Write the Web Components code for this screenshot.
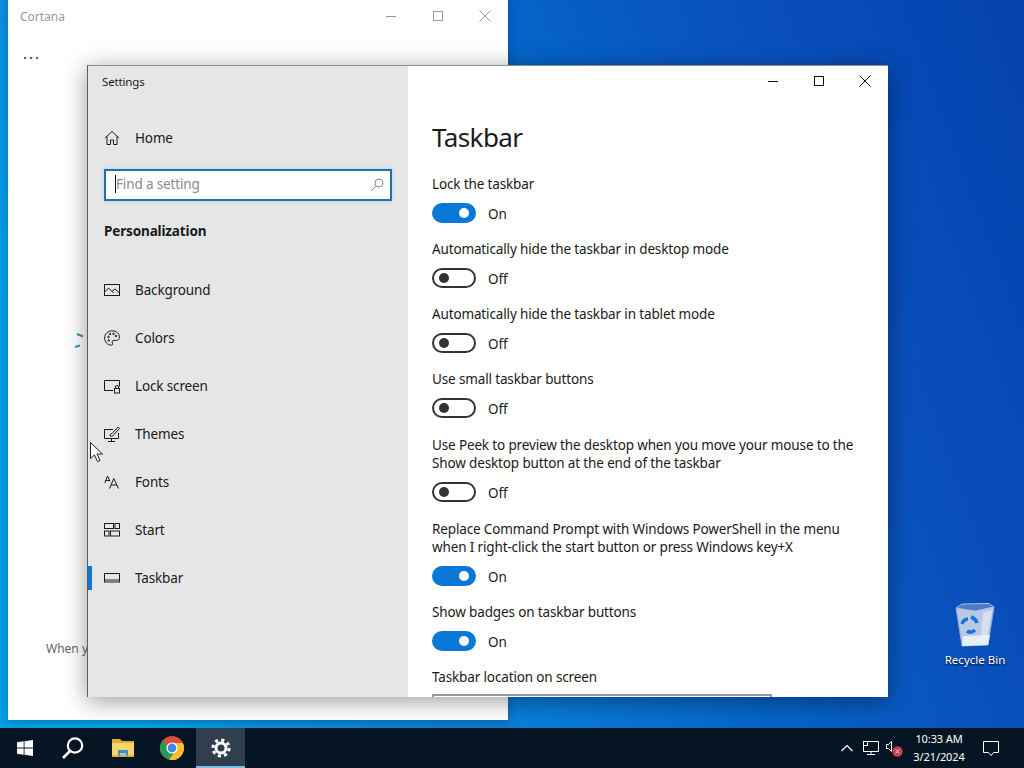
<!DOCTYPE html>
<html lang="en">
<head>
<meta charset="utf-8">
<title>Taskbar settings</title>
<style>
  html, body { margin: 0; height: 100%; overflow: hidden; }
  body { font-family: "Noto Sans", "Liberation Sans", sans-serif; }
</style>
</head>
<body>
<win-desktop>
  <cortana-window></cortana-window>
  <desktop-icon label="Recycle Bin"></desktop-icon>
  <settings-window>
    <nav-item slot="nav" icon="background">Background</nav-item>
    <nav-item slot="nav" icon="colors">Colors</nav-item>
    <nav-item slot="nav" icon="lock">Lock screen</nav-item>
    <nav-item slot="nav" icon="themes">Themes</nav-item>
    <nav-item slot="nav" icon="fonts">Fonts</nav-item>
    <nav-item slot="nav" icon="start">Start</nav-item>
    <nav-item slot="nav" icon="taskbar" active>Taskbar</nav-item>

    <setting-toggle on>Lock the taskbar</setting-toggle>
    <setting-toggle>Automatically hide the taskbar in desktop mode</setting-toggle>
    <setting-toggle>Automatically hide the taskbar in tablet mode</setting-toggle>
    <setting-toggle>Use small taskbar buttons</setting-toggle>
    <setting-toggle style="margin-top:1px;margin-bottom:1px">Use Peek to preview the desktop when you move your mouse to the<br>Show desktop button at the end of the taskbar</setting-toggle>
    <setting-toggle on>Replace Command Prompt with Windows PowerShell in the menu<br>when I right-click the start button or press Windows key+X</setting-toggle>
    <setting-toggle on>Show badges on taskbar buttons</setting-toggle>
    <setting-select>Taskbar location on screen</setting-select>
  </settings-window>
  <mouse-cursor></mouse-cursor>
  <win-taskbar></win-taskbar>
</win-desktop>

<script>
const capControls = (color) => `
  <svg width="16" height="16" viewBox="0 0 16 16" fill="none" stroke="${color}"><path d="M3 8.5h10"/></svg>
  <svg width="16" height="16" viewBox="0 0 16 16" fill="none" stroke="${color}"><rect x="3.5" y="3.5" width="9" height="9"/></svg>
  <svg width="16" height="16" viewBox="0 0 16 16" fill="none" stroke="${color}"><path d="M2.5 2.5l11 11M13.5 2.5l-11 11"/></svg>`;

const navIcons = {
  background: '<rect x=".5" y="2.5" width="15" height="11"/><path d="M.5 10l4-4 5 5M8 9.500l3-2.500 4.500 4"/>',
  colors: '<path d="M8 .8C3.800.8.600 4 .600 8c0 4 3.200 7.200 6.600 7.200 1.600 0 1.800-1.200 1.200-2.200-.8-1.300 0-2.600 1.600-2.600h2.400c1.800 0 3-1.200 3-3C15.400 3.400 12 .8 8 .8z"/><circle cx="4.500" cy="7" r=".8"/><circle cx="6" cy="4" r=".8"/><circle cx="9.500" cy="3.800" r=".8"/><circle cx="4.800" cy="10.500" r=".8"/><circle cx="12" cy="6" r=".8"/>',
  lock: '<path d="M9 12.500H.5v-10h15v6"/><rect x="10.500" y="10.500" width="5" height="4.500"/><path d="M11.500 10.500V9a1.500 1.500 0 0 1 3 0v1.500"/>',
  themes: '<path d="M9 3.500H.5v9h14V7M7.500 12.500v2.500M4 15.500h7"/><path d="M6 10c0-2 1-2.500 2-2.500L14 1l1.500 1.500L9.500 9c0 1-1.500 1.500-3.500 1z"/>',
  fonts: '<path d="M.8 9L3.500 2 6 7.500M1.600 6.500h3.600M5.500 14.500L9.800 4.500l4.700 10M7 11h6"/>',
  start: '<rect x=".5" y="1.500" width="9" height="5"/><rect x="11" y="1.500" width="4.500" height="5"/><rect x=".5" y="9" width="4.500" height="5"/><rect x="6.500" y="9" width="9" height="5"/>',
  taskbar: '<rect x=".5" y="3.500" width="15" height="8.500"/><path d="M.5 10h15"/>'
};

class WinDesktop extends HTMLElement {
  connectedCallback() {
    this.attachShadow({ mode: 'open' });
    this.shadowRoot.innerHTML = `
      <style>
        :host {
          display: block;
          position: relative;
          width: 1024px;
          height: 768px;
          overflow: hidden;
          background: linear-gradient(70deg, #00a2ea 13%, #0a90e0 22%, #0a7ed8 41%, #0563c6 61%, #0a50bc 78%, #0442ad 100%);
        }
      </style>
      <slot></slot>
    `;
  }
}

class CortanaWindow extends HTMLElement {
  connectedCallback() {
    this.attachShadow({ mode: 'open' });
    this.shadowRoot.innerHTML = `
      <style>
        :host {
          display: block;
          position: absolute;
          left: 8px; top: 0;
          width: 500px; height: 720px;
          background: #fff;
          box-shadow: 0 2px 10px rgba(0,0,0,.25);
          color: #9a9a9a;
          font-size: 12px;
        }
        .bar { display: flex; align-items: center; height: 32px; padding-left: 12px; }
        .bar span { flex: 1; }
        .ctl { display: flex; gap: 31px; padding-right: 15px; }
        .more { color: #222; font-size: 15px; letter-spacing: 2px; line-height: 16px; padding: 0 0 0 15px; margin-top: 13px; }
        .spin { position: absolute; left: 66px; top: 332px; }
        .note { position: absolute; left: 38px; top: 640px; color: #666; }
      </style>
      <div class="bar"><span>Cortana</span><div class="ctl">${capControls('#9a9a9a')}</div></div>
      <div class="more">...</div>
      <svg class="spin" width="12" height="18" viewBox="0 0 12 18" fill="none" stroke="#2f9bb8" stroke-width="2"><path d="M3 2l6 2.500M1 15l5-1.500"/></svg>
      <div class="note">When you</div>
    `;
  }
}

class SettingsWindow extends HTMLElement {
  connectedCallback() {
    this.attachShadow({ mode: 'open' });
    this.shadowRoot.innerHTML = `
      <style>
        :host {
          display: grid;
          grid-template-columns: 320px 1fr;
          position: absolute;
          left: 87px; top: 65px;
          width: 801px; height: 632px;
          box-sizing: border-box;
          border-left: 1px solid #55606a;
          border-top: 1px solid #8a9098;
          background: #fff;
          box-shadow: 0 4px 22px rgba(0,0,0,.4);
          color: #1a1a1a;
          overflow: hidden;
          font-size: 13.500px;
          letter-spacing: -.14px;
        }
        aside { background: #e6e6e6; display: flex; flex-direction: column; }
        .title { height: 32px; line-height: 32px; padding-left: 14px; font-size: 11.500px; }
        .home { display: flex; align-items: center; height: 48px; margin-top: 16px; padding-left: 16px; gap: 15px; }
        .search {
          display: flex; align-items: center;
          height: 32px; box-sizing: border-box;
          margin: 7px 16px 0 16px;
          border: 2px solid #2272a8;
          background: #fff;
          padding: 0 5px 0 9px;
          color: #8a8a8a;
          box-shadow: 0 0 4px rgba(120,190,240,.5);
        }
        .search span { flex: 1; border-left: 1px solid #111; line-height: 18px; margin-top: -2px; }
        h2 { font-size: inherit; font-weight: 700; margin: 20px 0 0 16px; line-height: 20px; }
        .nav { display: flex; flex-direction: column; margin-top: 25px; }
        main { position: relative; padding: 0 24px; }
        .ctl { position: absolute; top: 7px; right: 15px; display: flex; gap: 30px; }
        h1 { font-size: 26px; letter-spacing: -.6px; font-weight: 400; margin: 52px 0 19px; line-height: 38px; }
        .list { display: flex; flex-direction: column; }
      </style>
      <aside>
        <div class="title">Settings</div>
        <div class="home">
          <svg width="16" height="16" viewBox="0 0 16 16" fill="none" stroke="#1a1a1a"><path d="M1 8l7-6.500L15 8M3 6.500v8h3.500V10h3v4.500H13v-8"/></svg>
          <span>Home</span>
        </div>
        <div class="search">
          <span>Find a setting</span>
          <svg width="16" height="16" viewBox="0 0 16 16" fill="none" stroke="#8a8a8a"><circle cx="10" cy="6" r="4"/><path d="M7 9l-5 5"/></svg>
        </div>
        <h2>Personalization</h2>
        <div class="nav"><slot name="nav"></slot></div>
      </aside>
      <main>
        <div class="ctl">${capControls('#111')}</div>
        <h1>Taskbar</h1>
        <div class="list"><slot></slot></div>
      </main>
    `;
  }
}

class NavItem extends HTMLElement {
  connectedCallback() {
    const icon = navIcons[this.getAttribute('icon')];
    this.attachShadow({ mode: 'open' });
    this.shadowRoot.innerHTML = `
      <style>
        :host { display: flex; align-items: center; height: 48px; padding-left: 16px; gap: 15px; position: relative; }
        :host([active])::before {
          content: ""; position: absolute; left: 0; top: 12px;
          width: 4px; height: 24px; background: #0a78d0;
        }
      </style>
      <svg width="16" height="16" viewBox="0 0 16 16" fill="none" stroke="#1a1a1a">${icon}</svg>
      <span><slot></slot></span>
    `;
  }
}

class SettingToggle extends HTMLElement {
  connectedCallback() {
    const on = this.hasAttribute('on');
    this.attachShadow({ mode: 'open' });
    this.shadowRoot.innerHTML = `
      <style>
        :host { display: block; padding-bottom: 17px; }
        .label { line-height: 18px; }
        .row { display: flex; align-items: center; gap: 12px; margin-top: 10px; height: 20px; }
        .row span { position: relative; top: 1px; }
        .sw {
          width: 44px; height: 20px; box-sizing: border-box; border-radius: 10px;
          display: flex; align-items: center; padding: 0 5px;
          border: 2px solid #333;
        }
        .sw i { width: 10px; height: 10px; border-radius: 50%; background: #333; display: block; }
        .sw.on { background: #0a78d7; border-color: #0a78d7; justify-content: flex-end; }
        .sw.on i { background: #fff; }
      </style>
      <div class="label"><slot></slot></div>
      <div class="row"><div class="sw ${on ? 'on' : ''}"><i></i></div><span>${on ? 'On' : 'Off'}</span></div>
    `;
  }
}

class SettingSelect extends HTMLElement {
  connectedCallback() {
    this.attachShadow({ mode: 'open' });
    this.shadowRoot.innerHTML = `
      <style>
        :host { display: block; }
        .label { line-height: 18px; }
        .box { width: 340px; height: 32px; box-sizing: border-box; border: 2px solid #999; margin-top: 8px; }
      </style>
      <div class="label"><slot></slot></div>
      <div class="box"></div>
    `;
  }
}

class DesktopIcon extends HTMLElement {
  connectedCallback() {
    this.attachShadow({ mode: 'open' });
    this.shadowRoot.innerHTML = `
      <style>
        :host {
          display: flex; flex-direction: column; align-items: center;
          position: absolute; left: 935px; top: 603px; width: 80px;
          color: #fff; font-size: 11.500px; text-shadow: 0 1px 2px #000;
        }
        span { margin-top: 3px; line-height: 18px; }
      </style>
      <svg width="40" height="45" viewBox="0 0 40 45">
        <path d="M1 5L39 4 33 42 7 43z" fill="#b9c9e4" stroke="#8aa6d6"/>
        <path d="M1 5l6-4 27-.5 5 3.500L20 8z" fill="#4f78c8" stroke="#a7bde6"/>
        <path d="M28 10L25 39l7-1 5-31z" fill="#d5dfef"/>
        <path d="M8 33l27-1-2 10-26 1z" fill="#e9eff7"/>
        <g fill="none" stroke="#1177dd" stroke-width="3.600">
          <path d="M7 21c1-3 3-5 6-5"/><path d="M16 14c3 1 5 3 6 6"/><path d="M20 27c-2 2-5 3-8 1"/>
        </g>
      </svg>
      <span>${this.getAttribute('label')}</span>
    `;
  }
}

class MouseCursor extends HTMLElement {
  connectedCallback() {
    this.attachShadow({ mode: 'open' });
    this.shadowRoot.innerHTML = `
      <style>:host { display: block; position: absolute; left: 89px; top: 441px; line-height: 0; }</style>
      <svg width="16" height="22" viewBox="0 0 16 22"><path d="M1.500 1.500v16l4-3.500 3 6.500 2.500-1-3-6.500h5.500z" fill="#fff" stroke="#222"/></svg>
    `;
  }
}

class WinTaskbar extends HTMLElement {
  connectedCallback() {
    this.attachShadow({ mode: 'open' });
    this.shadowRoot.innerHTML = `
      <style>
        :host {
          display: flex; align-items: stretch;
          position: absolute; left: 0; right: 0; bottom: 0; height: 40px;
          background: #061523; color: #fff; font-size: 11px;
        }
        .btn { width: 49px; display: flex; align-items: center; justify-content: center; box-sizing: border-box; }
        .active { background: #2f3f4d; border-bottom: 2px solid #7cc0ea; padding-top: 2px; }
        .tray { margin-left: auto; display: flex; align-items: center; padding-right: 8px; }
        .clock { width: 54px; text-align: center; line-height: 18px; margin-left: 9px; letter-spacing: -.1px; }
        .notify { width: 50px; display: flex; justify-content: center; }
      </style>
      <div class="btn">
        <svg width="16" height="16" viewBox="0 0 16 16" fill="#fff"><path d="M0 2.300l6.700-1v6.300H0zM7.500 1.200L16 0v7.600H7.500zM0 8.400h6.700v6.300l-6.700-1zM7.500 8.400H16V16l-8.500-1.200z"/></svg>
      </div>
      <div class="btn">
        <svg style="margin-left:-2px" width="24" height="24" viewBox="0 0 24 24" fill="none" stroke="#fff" stroke-width="2.200"><circle cx="14" cy="9.500" r="7.200"/><path d="M9 15l-7 7" stroke-width="2.600"/></svg>
      </div>
      <div class="btn">
        <svg width="22" height="20" viewBox="0 0 22 20">
          <path d="M0 1h8l2 2h12v4H0z" fill="#e0b02c"/>
          <path d="M0 5h22v14H0z" fill="#f7d568"/>
          <path d="M6 12h10v7h-2v-4H8v4H6z" fill="#3d8ec9"/>
          <path d="M8 15h6v4H8z" fill="#a7c7de"/>
          <path d="M0 17h22v2H0z" fill="#d8a92a" opacity=".7"/>
        </svg>
      </div>
      <div class="btn">
        <svg width="24" height="24" viewBox="0 0 24 24">
          <circle cx="12" cy="12" r="12" fill="#dd4b3e"/>
          <path d="M12 12L1.600 18A12 12 0 0 1 3 4l5 8z" fill="#1e9e55"/>
          <path d="M12 12h11.500A12 12 0 0 1 1.600 18L7 14z" fill="#1e9e55"/>
          <path d="M12 7h10.900A12 12 0 0 1 9 23.600L17 13z" fill="#fbc02d"/>
          <circle cx="12" cy="12" r="5.600" fill="#fff"/>
          <circle cx="12" cy="12" r="4.400" fill="#3f84e8"/>
        </svg>
      </div>
      <div class="btn active">
        <svg width="20" height="20" viewBox="0 0 20 20" fill="none" stroke="#fff">
          <circle cx="10" cy="10" r="5" stroke-width="3"/>
          <circle cx="10" cy="10" r="8" stroke-width="3.200" stroke-dasharray="3.100 3.180"/>
        </svg>
      </div>
      <div class="tray">
        <svg style="margin-right:9px" width="12" height="8" viewBox="0 0 12 8" fill="none" stroke="#fff" stroke-width="1.200"><path d="M.5 7L6 1.500 11.500 7"/></svg>
        <svg style="margin-right:5px" width="18" height="16" viewBox="0 0 18 16" fill="none" stroke="#fff"><path d="M1.500 1.500h15v10h-15zM9 11.500v3M5 14.500h8"/><rect x="1.500" y="1.500" width="4" height="4"/></svg>
        <svg width="18" height="18" viewBox="0 0 18 18" fill="none" stroke="#fff">
          <path d="M1.500 5.500h2l3-3v10l-3-3h-2z"/>
          <circle cx="12.500" cy="12.500" r="5.200" fill="#c73e4c" stroke="none"/>
          <path d="M10.500 10.500l4 4M14.500 10.500l-4 4" stroke="#f3d4d6"/>
        </svg>
        <div class="clock">10:33 AM<br>3/21/2024</div>
        <div class="notify">
          <svg width="18" height="18" viewBox="0 0 18 18" fill="none" stroke="#fff"><path d="M1.500 2.500h15v11h-5l-2.500 3-2.500-3h-5z"/></svg>
        </div>
      </div>
    `;
  }
}

customElements.define('win-desktop', WinDesktop);
customElements.define('cortana-window', CortanaWindow);
customElements.define('settings-window', SettingsWindow);
customElements.define('nav-item', NavItem);
customElements.define('setting-toggle', SettingToggle);
customElements.define('setting-select', SettingSelect);
customElements.define('desktop-icon', DesktopIcon);
customElements.define('mouse-cursor', MouseCursor);
customElements.define('win-taskbar', WinTaskbar);
</script>
</body>
</html>
